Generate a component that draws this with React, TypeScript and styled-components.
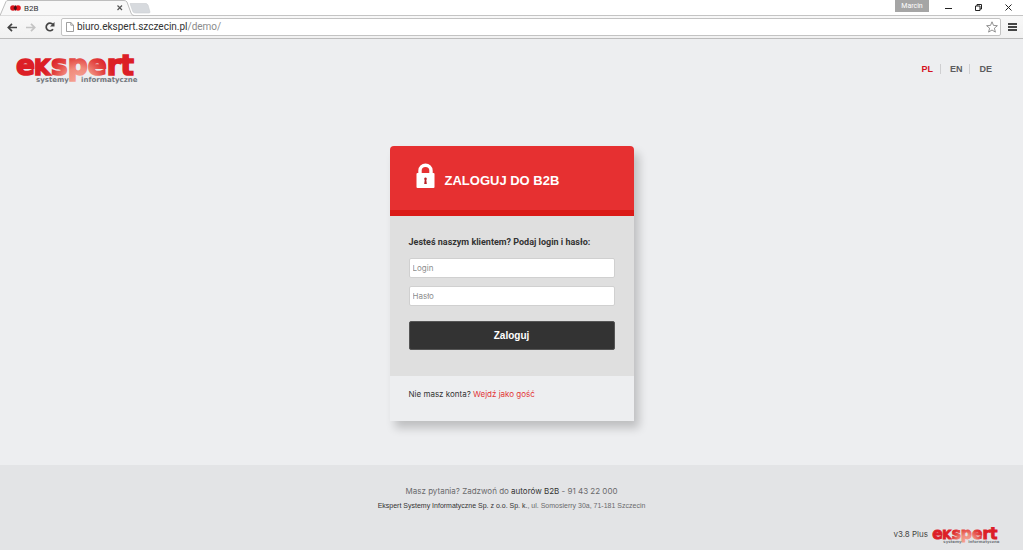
import React from "react";
import styled, { createGlobalStyle } from "styled-components";

const Global = createGlobalStyle`
  * { box-sizing: border-box; }
  body { margin: 0; background: #edeef0; font-family: "Liberation Sans", Arial, sans-serif; }
`;

const Screen = styled.div`
  display: flex;
  flex-direction: column;
  min-height: 100vh;
`;

const TabStrip = styled.header`
  display: flex;
  height: 16px;
  background: #fff;
  font-family: Roboto, sans-serif;
  box-shadow: inset 0 -1px #c4c4c4;
`;

const Tab = styled.div`
  position: relative;
  display: flex;
  align-items: center;
  width: 134px;
  padding: 0 11px 0 10px;
  font-size: 8px;
  color: #333;
`;

const TabShape = styled.svg`
  position: absolute;
  inset: 0;
`;

const TabLabel = styled.span`
  position: relative;
  flex: 1;
  margin-left: 3px;
`;

const TabIcon = styled.svg`
  position: relative;
  flex: none;
`;

const PlainButton = styled.button`
  position: relative;
  display: flex;
  align-items: center;
  justify-content: center;
  padding: 0;
  border: 0;
  background: none;
  color: #4b4b4b;
`;

const WindowControls = styled.div`
  display: flex;
  margin-left: auto;
`;

const UserBadge = styled.span`
  width: 34px;
  height: 12px;
  margin-right: 4px;
  background: #a5a5a5;
  color: #fff;
  font-size: 7px;
  line-height: 12px;
  text-align: center;
`;

const WindowButton = styled(PlainButton)`
  width: 30px;
  height: 15px;
  color: #222;
`;

const Toolbar = styled.nav`
  display: flex;
  align-items: center;
  gap: 4px;
  height: 23px;
  padding: 0 3px 0 4px;
  background: linear-gradient(#f8f8f8, #f1f1f1);
  border-bottom: 1px solid #bcbcbc;
`;

const ToolButton = styled(PlainButton)`
  width: 15px;
  height: 18px;
`;

const AddressBar = styled.div`
  display: flex;
  flex: 1;
  align-items: center;
  gap: 3px;
  height: 18px;
  padding: 0 2px 0 4px;
  border: 1px solid #c3c3c3;
  border-radius: 2px;
  background: #fff;
  font-family: Roboto, sans-serif;
  font-size: 10px;
  line-height: 16px;
  color: #333;
`;

const Address = styled.span`
  flex: 1;
`;

const Muted = styled.span`
  color: #8b8b8b;
`;

const PageTop = styled.div`
  display: flex;
  justify-content: space-between;
  align-items: flex-start;
  padding: 9px 24px 0 15px;
`;

const Languages = styled.nav`
  display: flex;
  padding-top: 16px;
`;

const Language = styled.a<{ $active?: boolean }>`
  padding: 0 7px 0 9px;
  font-size: 9px;
  line-height: 10px;
  font-weight: bold;
  text-decoration: none;
  color: ${(p) => (p.$active ? "#d5101f" : "#5c5c5e")};
  & + & { border-left: 1px solid #cfcfd1; }
`;

const Main = styled.main`
  display: flex;
  flex: 1;
  justify-content: center;
  align-items: flex-start;
  padding: 60px 0 44px;
`;

const Card = styled.form`
  width: 244px;
  border-radius: 4px 4px 0 0;
  background: #edeef0;
  box-shadow: 5px 7px 10px rgba(0, 0, 0, 0.2);
`;

const CardHeader = styled.div`
  display: flex;
  align-items: flex-start;
  gap: 10px;
  height: 70px;
  padding: 17px 26px 0;
  border-bottom: 6px solid #db1a17;
  border-radius: 4px 4px 0 0;
  background: #e63031;
`;

const Title = styled.h1`
  margin: 10px 0 0;
  font-size: 13px;
  line-height: 16px;
  color: #fff;
`;

const CardBody = styled.div`
  display: flex;
  flex-direction: column;
  padding: 20px 19px 26px;
  background: #dfdfdf;
`;

const Lead = styled.p`
  margin: 0 0 10px;
  font-family: Roboto, sans-serif;
  font-size: 9px;
  line-height: 12px;
  font-weight: bold;
  color: #333;
`;

const Field = styled.input`
  width: 100%;
  height: 20px;
  margin-bottom: 8px;
  padding: 0 3px;
  border: 1px solid #d0d0d0;
  border-radius: 2px;
  background: #fff;
  font-family: Inter, sans-serif;
  font-size: 8px;
  &::placeholder { color: #8d8d8d; }
`;

const Submit = styled.button`
  height: 29px;
  margin-top: 7px;
  padding: 0;
  border: 1px solid #555;
  border-radius: 2px;
  background: #333;
  color: #fff;
  font-family: inherit;
  font-size: 10px;
  font-weight: bold;
`;

const CardFooter = styled.p`
  margin: 0;
  padding: 12px 19px 21px;
  font-family: Inter, sans-serif;
  font-size: 8px;
  line-height: 12px;
  color: #333;
`;

const GuestLink = styled.a`
  color: #e23536;
  text-decoration: none;
`;

const Footer = styled.footer`
  display: flex;
  flex-direction: column;
  padding: 20px 22px 5px;
  background: #e3e4e6;
  text-align: center;
  color: #6a6a6c;
`;

const Contact = styled.p`
  margin: 0;
  font-family: Inter, sans-serif;
  font-size: 8px;
  line-height: 12px;
`;

const Company = styled.p`
  margin: 4px 0 0;
  font-size: 7px;
  line-height: 10px;
`;

const DarkLink = styled.a`
  color: #333;
  text-decoration: none;
`;

const Version = styled.div`
  display: flex;
  align-items: center;
  justify-content: flex-end;
  gap: 3px;
  height: 22px;
  margin-top: 12px;
  font-family: Inter, sans-serif;
  font-size: 8px;
  line-height: 16px;
  color: #444;
`;

function Logo({ width, id }: { width: number; id: string }) {
  return (
    <svg width={width} height={Math.round((width * 38) / 124)} viewBox="0 0 124 38" role="img" aria-label="ekspert systemy informatyczne">
      <defs>
        <radialGradient id={id} gradientUnits="userSpaceOnUse" cx="64" cy="36" r="36">
          <stop offset="0" stopColor="#f6ab9c" />
          <stop offset="0.45" stopColor="#f08a7c" />
          <stop offset="0.75" stopColor="#e2423f" />
          <stop offset="1" stopColor="#dc1f26" />
        </radialGradient>
      </defs>
      <text y="27" fontFamily="DejaVu Sans" fontWeight="bold" fontSize="28" fill={`url(#${id})`} stroke={`url(#${id})`} strokeWidth="1.6">
        <tspan x="1">e</tspan>
        <tspan x="19" fontSize="21">K</tspan>
        <tspan x="36">spert</tspan>
      </text>
      <g fontFamily="DejaVu Sans" fontWeight="bold" fontSize="7" fill="#74787e">
        <text x="21" y="34">systemy</text>
        <text x="66" y="34">informatyczne</text>
      </g>
    </svg>
  );
}

export default function App() {
  return (
    <Screen>
      <Global />
      <TabStrip>
        <Tab>
          <TabShape width="156" height="16" viewBox="0 0 156 16">
            <path d="M0 15.5 L6 1.5 Q6.500 .5 8 .5 H124 Q126 .5 127 2 L131 13 Q132 15.500 134 15.500" fill="#f8f8f8" stroke="#bdbdbd" />
            <path d="M130 3.500 H146 Q147 3.500 148 5 L150 12 Q150 13 149 13 H136 Q134 13 133 12 Z" fill="#d7dade" stroke="#c9ccd0" strokeWidth=".6" />
          </TabShape>
          <TabIcon width="11" height="8" viewBox="0 0 11 8">
            <circle cx="3" cy="4" r="2.800" fill="#d8141c" />
            <circle cx="8" cy="4" r="2.800" fill="#e8141c" />
            <path d="M5.500 1 L3.500 4 L5.500 7 L7 4 Z" fill="#4a1014" />
          </TabIcon>
          <TabLabel>B2B</TabLabel>
          <PlainButton aria-label="Zamknij kartę">
            <svg width="6" height="6" viewBox="0 0 6 6"><path d="M.5 .5 L5 5 M5 .5 L.5 5" stroke="#555" strokeWidth="1.200" /></svg>
          </PlainButton>
        </Tab>
        <WindowControls>
          <UserBadge>Marcin</UserBadge>
          <WindowButton aria-label="Minimalizuj">
            <svg width="7" height="7" viewBox="0 0 7 7"><path d="M0 4.500 H7" stroke="currentColor" /></svg>
          </WindowButton>
          <WindowButton aria-label="Przywróć">
            <svg width="7" height="7" viewBox="0 0 7 7" fill="none" stroke="currentColor"><path d="M.5 2 H5 V6.500 H.5 Z M2 2 V.5 H6.500 V5 H5" /></svg>
          </WindowButton>
          <WindowButton aria-label="Zamknij">
            <svg width="7" height="7" viewBox="0 0 7 7"><path d="M.5 .5 L6.500 6.500 M6.500 .5 L.5 6.500" stroke="currentColor" /></svg>
          </WindowButton>
        </WindowControls>
      </TabStrip>
      <Toolbar>
        <ToolButton aria-label="Wstecz">
          <svg width="10" height="9" viewBox="0 0 10 9" fill="none" stroke="#444" strokeWidth="1.700"><path d="M10 4.500 H1.500 M5 .8 L1.300 4.500 L5 8.200" /></svg>
        </ToolButton>
        <ToolButton aria-label="Dalej">
          <svg width="10" height="9" viewBox="0 0 10 9" fill="none" stroke="#c4c4c4" strokeWidth="1.700"><path d="M0 4.500 H8.500 M5 .8 L8.700 4.500 L5 8.200" /></svg>
        </ToolButton>
        <ToolButton aria-label="Odśwież">
          <svg width="10" height="10" viewBox="0 0 10 10"><path d="M8 7.300 A3.800 3.800 0 1 1 7.800 2.400" fill="none" stroke="#444" strokeWidth="1.700" /><path d="M9.500 0 V4.500 H5 Z" fill="#444" /></svg>
        </ToolButton>
        <AddressBar>
          <svg width="8" height="10" viewBox="0 0 8 10" fill="#fff" stroke="#888" strokeWidth=".8"><path d="M.5 .5 H4.800 L7.500 3.200 V9.500 H.5 Z M4.800 .5 V3.200 H7.500" /></svg>
          <Address>biuro.ekspert.szczecin.pl<Muted>/demo/</Muted></Address>
          <PlainButton aria-label="Dodaj do zakładek">
            <svg width="12" height="12" viewBox="0 0 12 12"><path d="M6 .8 L7.500 4.400 L11.400 4.700 L8.400 7.200 L9.400 11.100 L6 9 L2.600 11.100 L3.600 7.200 L.6 4.700 L4.500 4.400 Z" fill="#fff" stroke="#777" strokeWidth=".8" /></svg>
          </PlainButton>
        </AddressBar>
        <ToolButton aria-label="Menu">
          <svg width="9" height="8" viewBox="0 0 9 8"><path d="M0 1 H9 M0 4 H9 M0 7 H9" stroke="#444" strokeWidth="1.800" /></svg>
        </ToolButton>
      </Toolbar>
      <PageTop>
        <Logo width={124} id="logo-top" />
        <Languages>
          <Language href="#pl" $active>PL</Language>
          <Language href="#en">EN</Language>
          <Language href="#de">DE</Language>
        </Languages>
      </PageTop>
      <Main>
        <Card>
          <CardHeader>
            <svg width="19" height="25" viewBox="0 0 19 25">
              <path d="M4 11 V7.500 A5.500 5.300 0 0 1 15 7.500 V11" fill="none" stroke="#fff" strokeWidth="3.400" />
              <rect x="0.500" y="10" width="18" height="15" rx="1" fill="#fff" />
              <path d="M9.500 14.500 a1.400 1.400 0 0 1 .8 2.500 L10.800 21 H8.200 L8.700 17 A1.400 1.400 0 0 1 9.500 14.500 Z" fill="#b82025" />
            </svg>
            <Title>ZALOGUJ DO B2B</Title>
          </CardHeader>
          <CardBody>
            <Lead>Jesteś naszym klientem? Podaj login i hasło:</Lead>
            <Field type="text" placeholder="Login" aria-label="Login" />
            <Field type="password" placeholder="Hasło" aria-label="Hasło" />
            <Submit type="button">Zaloguj</Submit>
          </CardBody>
          <CardFooter>
            Nie masz konta? <GuestLink href="#guest">Wejdź jako gość</GuestLink>
          </CardFooter>
        </Card>
      </Main>
      <Footer>
        <Contact>Masz pytania? Zadzwoń do <DarkLink href="#authors">autorów B2B</DarkLink> - 91 43 22 000</Contact>
        <Company><DarkLink href="#company">Ekspert Systemy Informatyczne Sp. z o.o. Sp. k.</DarkLink>, ul. Somosierry 30a, 71-181 Szczecin</Company>
        <Version>v3.8 Plus <Logo width={70} id="logo-footer" /></Version>
      </Footer>
    </Screen>
  );
}
